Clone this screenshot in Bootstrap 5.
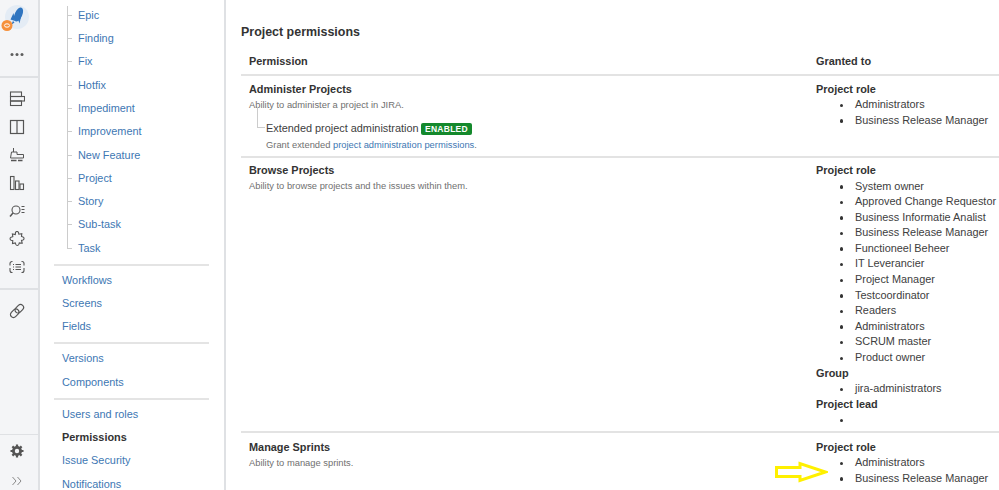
<!DOCTYPE html>
<html lang="en">
<head>
<meta charset="utf-8">
<title>Project permissions</title>
<link href="https://cdn.jsdelivr.net/npm/bootstrap@5.3.0/dist/css/bootstrap.min.css" rel="stylesheet">
<style>
html,body{height:490px;overflow:hidden}
body{font-family:"Liberation Sans",Arial,sans-serif;font-size:10.9px;color:#404040;background:#fff}
.app-shell{height:490px;position:relative;overflow:hidden}
.rail{width:40px;flex:none;height:490px;background:#f4f5f7;border-right:2px solid #dfe1e4}
.rail-top{height:78px;border-bottom:2px solid #dfe1e4;position:relative}
.logo-wrap{position:absolute;left:0;top:0}
.rail-mid{padding-top:7px;height:212px;border-bottom:2px solid #dfe1e4}
.rail-ico{height:28px;display:flex;align-items:center;justify-content:center;padding-right:4px}
.rail-ico svg{display:block}
.rail-link{height:42px;display:flex;align-items:center;justify-content:center;padding-right:4px}
.rail-bottom{border-top:1px solid #dfe1e4;margin-top:auto;height:56px;padding-top:2px}
.rail-bottom .rail-ico+.rail-ico{height:32px}
.side{width:186px;flex:none;height:490px;border-right:2px solid #dfe1e4;padding:3.8px 15px 0 14px;overflow:hidden}
.side a{display:block;height:23.3px;line-height:23.3px;color:#4077b3;text-decoration:none;padding-left:8px;white-space:nowrap}
.side a.on{color:#333;font-weight:700}
.tree{margin:0 0 0 13px;padding:0;position:relative;border:0}
.tree::before{content:"";position:absolute;left:0;top:2px;height:242px;width:1px;background:#ccc}
.tree a{padding-left:11px;position:relative}
.tree a::before{content:"";position:absolute;left:0;top:11px;width:5px;height:1px;background:#ccc}
.sep{height:2px;background:#e4e4e4;margin:3.7px 0 3px;opacity:1;border:0}
.main{flex:1;min-width:0;padding:0 0 0 15px;overflow:hidden}
.page-title{font-size:12.45px;font-weight:700;color:#333;margin:24px 0 0;line-height:16px}
.perm{width:760px;margin:6px 0 0;table-layout:fixed;color:#404040;border-collapse:collapse}
.perm th,.perm td{padding:6px 8px 3px;line-height:15.5px;font-size:10.9px;vertical-align:top;border-bottom:2px solid #e3e3e3;background:transparent;color:#404040;box-shadow:none}
.perm th{padding:8px 8px 4px;font-weight:700;white-space:nowrap;color:#333}
.perm .first{width:567px}
.perm tr:last-child td{border-bottom:0}
.perm tbody tr:nth-child(2) td{padding:5.5px 8px 3px}
.perm tbody tr:nth-child(3) td{padding-top:7px}
.perm ul{margin:0;padding-left:39px;list-style:none}
.perm li{height:15.6px;white-space:nowrap;position:relative}
.perm li::before{content:"";position:absolute;left:-15.5px;top:6.500px;width:3.500px;height:3.500px;border-radius:50%;background:#333}
.ttl{font-weight:700;color:#333}
.desc{font-size:9.35px;color:#707070;line-height:15px;padding-top:.5px}
.ext{position:relative;margin-left:17px;margin-top:7.500px}
.ext::before{content:"";position:absolute;left:-9px;top:-13px;height:21px;width:8px;border-left:1px solid #ccc;border-bottom:1px solid #ccc}
.ext-name{line-height:17px;display:flex;align-items:center;gap:2px}
.enabled{background:#14892c;color:#fff;font-weight:700;font-size:8.5px;line-height:12px;padding:0 4.500px;border-radius:2px;letter-spacing:.25px;margin-left:0}
.desc a{color:#4077b3;text-decoration:none}
.yellow-arrow{position:absolute;left:774px;top:461px}
</style>
</head>
<body>
<div class="app-shell d-flex">
  <nav class="rail d-flex flex-column">
    <div class="rail-top">
      <svg class="logo-wrap" width="38" height="60" viewBox="0 0 38 60">
        <circle cx="17" cy="17" r="12" fill="#e4ecf5"/>
        <ellipse cx="18.500" cy="14.500" rx="3.800" ry="7.500" transform="rotate(24 18.500 14.500)" fill="#2f75c0"/>
        <path d="M13.500 13l-3 6.500 4.500 1.500zM18 19.500l1.500 4 1.500-6.500zM13 21l-2 4 3.500-2.500z" fill="#2f75c0"/>
        <circle cx="7" cy="25.500" r="5.500" fill="#f6903b"/>
        <ellipse cx="7" cy="25.500" rx="2.600" ry="1.700" fill="none" stroke="#fff" stroke-width="1"/>
        <circle cx="12" cy="54.500" r="1.500" fill="#5e5e5e"/><circle cx="17" cy="54.500" r="1.500" fill="#5e5e5e"/><circle cx="22" cy="54.500" r="1.500" fill="#5e5e5e"/>
      </svg>
    </div>
    <div class="rail-mid">
      <div class="rail-ico"><svg width="16" height="16" viewBox="0 0 16 16" fill="none" stroke="#555" stroke-width="1.100"><rect x="1.500" y="1" width="11" height="4.500"/><rect x="1.500" y="5.500" width="14" height="4.500"/><rect x="1.500" y="10" width="11" height="4.500"/></svg></div>
      <div class="rail-ico"><svg width="16" height="16" viewBox="0 0 16 16" fill="none" stroke="#555" stroke-width="1.200"><rect x="1.500" y="1.500" width="13" height="13"/><path d="M8 1.500v13"/></svg></div>
      <div class="rail-ico"><svg width="16" height="16" viewBox="0 0 16 16" fill="none" stroke="#555" stroke-width="1"><path d="M4.500 1v4"/><path d="M2.500 5h5.500v2.500h6.500v3.500H1.500z"/><path d="M2 13.500h5.500M9 13.500h4.500" stroke-width="1.300"/></svg></div>
      <div class="rail-ico"><svg width="16" height="16" viewBox="0 0 16 16" fill="none" stroke="#555" stroke-width="1.100"><rect x="1.500" y="1.500" width="3.500" height="13"/><rect x="6.500" y="6" width="3.500" height="8.500"/><rect x="11" y="9" width="3.500" height="5.500"/></svg></div>
      <div class="rail-ico"><svg width="16" height="16" viewBox="0 0 16 16" fill="none" stroke="#555" stroke-width="1.100"><circle cx="7" cy="7" r="4"/><path d="M4 10l-3 3.500" stroke-width="1.500"/><path d="M12.500 3.500h3M12.500 6.500h3M12.500 9.500h3"/></svg></div>
      <div class="rail-ico"><svg width="16" height="16" viewBox="0 0 16 16" fill="none" stroke="#555" stroke-width="1.100"><path d="M6.500 1.500a1.600 1.600 0 0 1 3 0l.3 1.700 3-.6-.3 2.800 1.500.5a1.600 1.600 0 0 1 0 3l-1.500.5.700 2.800-2.900-.3-.5 1.500a1.600 1.600 0 0 1-3 0l-.5-1.500-2.800.6.300-2.800-1.700-.5a1.600 1.600 0 0 1 0-3l1.700-.5-.4-2.800 2.900.6z"/></svg></div>
      <div class="rail-ico"><svg width="16" height="16" viewBox="0 0 16 16" fill="none" stroke="#555" stroke-width="1.100"><path d="M3.500 2.500h-.5a2 2 0 0 0-2 2v2M1 9v2.500a2 2 0 0 0 2 2h.5M12.500 2.500h.5a2 2 0 0 1 2 2v2M15 9v2.500a2 2 0 0 1-2 2h-.5"/><path d="M4 5.500h1M6.500 5.500h5.500M4 8h1M6.500 8h5.500M4 10.500h1M6.500 10.500h5.500"/></svg></div>
    </div>
    <div class="rail-link"><svg width="16" height="16" viewBox="0 0 16 16" fill="none" stroke="#555" stroke-width="1.200"><g transform="rotate(-45 8 8)"><rect x="0" y="5" width="9.500" height="6" rx="3"/><rect x="6.500" y="5" width="9.500" height="6" rx="3"/></g></svg></div>
    <div class="rail-bottom">
      <div class="rail-ico"><svg width="16" height="16" viewBox="0 0 16 16"><circle cx="8" cy="8" r="3.600" fill="none" stroke="#555" stroke-width="2.800"/><path d="M8 1.500v3M8 11.500v3M1.500 8h3M11.500 8h3M3.400 3.400l2.100 2.100M10.500 10.500l2.100 2.100M12.600 3.400l-2.100 2.100M5.500 10.500l-2.100 2.100" stroke="#555" stroke-width="2.200"/></svg></div>
      <div class="rail-ico"><svg width="12" height="10" viewBox="0 0 12 10" fill="none" stroke="#8a8a8a" stroke-width="1"><path d="M1.500 1l3.500 4-3.500 4M6.500 1l3.500 4-3.500 4"/></svg></div>
    </div>
  </nav>
  <aside class="side">
    <div class="tree">
      <a href="#">Epic</a><a href="#">Finding</a><a href="#">Fix</a><a href="#">Hotfix</a><a href="#">Impediment</a><a href="#">Improvement</a><a href="#">New Feature</a><a href="#">Project</a><a href="#">Story</a><a href="#">Sub-task</a><a href="#">Task</a>
    </div>
    <hr class="sep">
    <a href="#">Workflows</a><a href="#">Screens</a><a href="#">Fields</a>
    <hr class="sep">
    <a href="#">Versions</a><a href="#">Components</a>
    <hr class="sep">
    <a href="#">Users and roles</a><a href="#" class="on">Permissions</a><a href="#">Issue Security</a><a href="#">Notifications</a>
  </aside>
  <main class="main">
    <h2 class="page-title">Project permissions</h2>
    <table class="table perm">
      <thead><tr><th class="first">Permission</th><th>Granted to</th></tr></thead>
      <tbody>
        <tr>
          <td>
            <div class="ttl">Administer Projects</div>
            <div class="desc">Ability to administer a project in JIRA.</div>
            <div class="ext">
              <div class="ext-name">Extended project administration <span class="enabled">ENABLED</span></div>
              <div class="desc">Grant extended <a href="#">project administration permissions</a>.</div>
            </div>
          </td>
          <td><div class="ttl">Project role</div><ul><li>Administrators</li><li>Business Release Manager</li></ul></td>
        </tr>
        <tr>
          <td><div class="ttl">Browse Projects</div><div class="desc">Ability to browse projects and the issues within them.</div></td>
          <td>
            <div class="ttl">Project role</div>
            <ul><li>System owner</li><li>Approved Change Requestor</li><li>Business Informatie Analist</li><li>Business Release Manager</li><li>Functioneel Beheer</li><li>IT Leverancier</li><li>Project Manager</li><li>Testcoordinator</li><li>Readers</li><li>Administrators</li><li>SCRUM master</li><li>Product owner</li></ul>
            <div class="ttl">Group</div>
            <ul><li>jira-administrators</li></ul>
            <div class="ttl">Project lead</div>
            <ul><li></li></ul>
          </td>
        </tr>
        <tr>
          <td><div class="ttl">Manage Sprints</div><div class="desc">Ability to manage sprints.</div></td>
          <td><div class="ttl">Project role</div><ul><li>Administrators</li><li>Business Release Manager</li></ul></td>
        </tr>
      </tbody>
    </table>
  </main>
  <svg class="yellow-arrow" width="54" height="22" viewBox="0 0 54 22"><path d="M2.500 6.500h23.500V2.500l25.500 8.500-25.500 8.500v-4H2.500z" fill="#fff" stroke="#fff000" stroke-width="3"/></svg>
</div>
<script src="https://cdn.jsdelivr.net/npm/bootstrap@5.3.0/dist/js/bootstrap.bundle.min.js"></script>
</body>
</html>
